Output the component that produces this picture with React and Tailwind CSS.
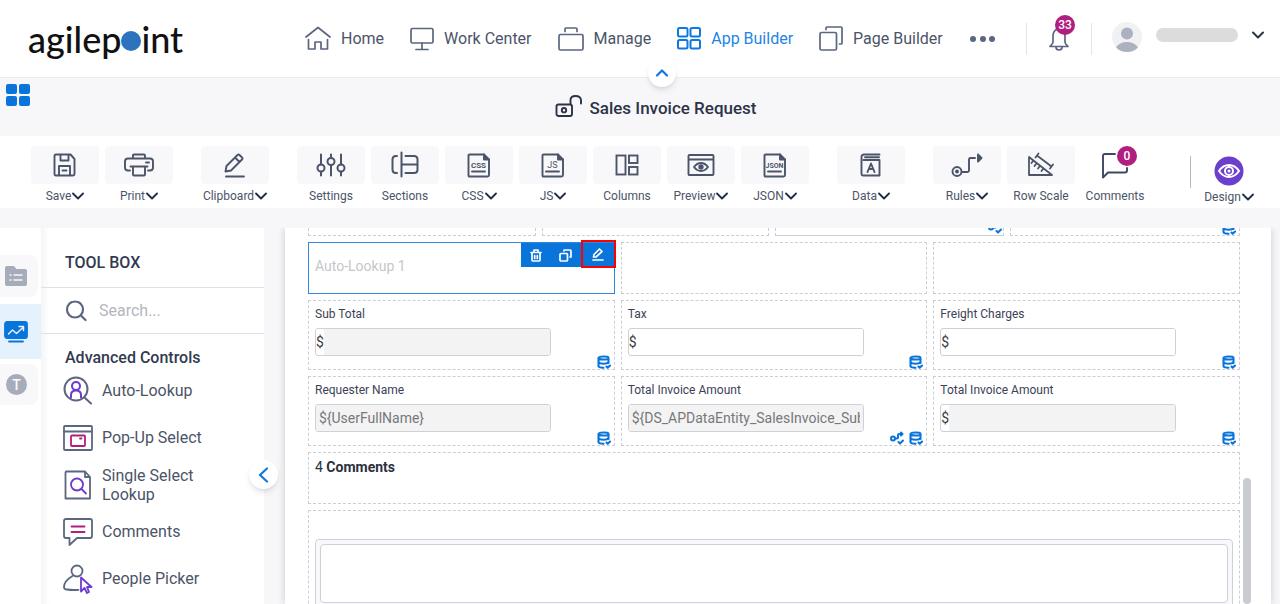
import { useState } from 'react';
import clsx from 'clsx';

const Svg = ({ w = 24, h = w, vb, sw = 2, children, className = '' }) => (
  <svg
    width={w}
    height={h}
    viewBox={vb || `0 0 ${w} ${h}`}
    fill="none"
    stroke="currentColor"
    strokeWidth={sw}
    strokeLinecap="round"
    strokeLinejoin="round"
    aria-hidden="true"
    className={clsx('shrink-0', className)}
  >
    {children}
  </svg>
);

const Chevron = () => (
  <Svg w={12} h={8} sw={1.8} className="text-[#1f2a44]"><path d="M1 1.500 6 6.500l5-5" /></Svg>
);

/* Top navigation icons */
const HomeIcon = () => (
  <Svg w={26} sw={1.7}>
    <path d="M1 11 13 1.500 25 11" />
    <path d="M3.500 13.500V23h6.500v-7h6v7h6.500v-9.500" />
  </Svg>
);
const MonitorIcon = () => (
  <Svg w={24} sw={1.7}>
    <rect x="1" y="1.500" width="22" height="14.500" rx="1.500" />
    <path d="M12 16v6M6 22.500h12" />
  </Svg>
);
const BriefcaseIcon = () => (
  <Svg w={26} h={24} sw={1.7}>
    <rect x="1" y="7.500" width="24" height="15.500" rx="1.500" />
    <path d="M7 4.500V2q0-1 1-1h10q1 0 1 1v2.500" />
  </Svg>
);
const TilesIcon = () => (
  <Svg w={24} h={23} sw={2}>
    <rect x="1" y="1" width="9.500" height="8.500" rx="1.500" />
    <rect x="13.500" y="1" width="9.500" height="8.500" rx="1.500" />
    <rect x="1" y="13" width="9.500" height="8.500" rx="1.500" />
    <rect x="13.500" y="13" width="9.500" height="8.500" rx="1.500" />
  </Svg>
);
const PagesIcon = () => (
  <Svg w={24} h={25} sw={1.7}>
    <rect x="1" y="6.500" width="16.500" height="17.500" rx="1.500" />
    <path d="M7 3.500V2q0-1 1-1h14q1 0 1 1v15q0 1-1 1h-1.500" />
  </Svg>
);
const BellIcon = () => (
  <Svg w={20} h={25} sw={1.7}>
    <path d="M7.500 3.500Q4 5.500 4 10v6q0 2-3 4.500h18q-3-2.500-3-4.500v-6q0-4.500-3.500-6.500" />
    <path d="M7 21q0 3 3 3t3-3" />
  </Svg>
);

/* Ribbon icons */
const SaveIcon = () => (
  <Svg w={24} sw={1.9}>
    <path d="M3 1.500h14.500l4 4.500V21q0 1.500-1.500 1.500H3Q1.500 22.500 1.500 21V3Q1.500 1.500 3 1.500Z" />
    <path d="M7.500 2v5.500h8V2M6 22v-9h11v9M9.500 17.500h4" />
  </Svg>
);
const PrintIcon = () => (
  <Svg w={30} h={24} sw={1.9}>
    <path d="M9 5V2.500Q9 1.500 10 1.500h10q1 0 1 1V5" />
    <path d="M6 17.500H4q-3 0-3-3V8.500Q1 5.500 4 5.500h22q3 0 3 3v6q0 3-3 3h-2M6.500 13.500h17M22 9.500h3" />
    <path d="M9 14v7.500q0 1 1 1h10q1 0 1-1V14" />
  </Svg>
);
const PencilIcon = () => (
  <Svg w={22} h={25} sw={1.9}>
    <path d="M1.500 18.500 2.500 13 13.500 2q1-1 2 0L18 4.500q1 1 0 2L7 17.500ZM11 4.500 15.500 9M2 23.500h18" />
  </Svg>
);
const SettingsIcon = () => (
  <Svg w={30} h={24} sw={2}>
    <path d="M5 1.500v10M5 19v3.500M15 1.500v3M15 12v10.500M25 1.500v10M25 19v3.500" />
    <circle cx="5" cy="15" r="3.500" />
    <circle cx="15" cy="8.500" r="3.500" />
    <circle cx="25" cy="15" r="3.500" />
  </Svg>
);
const SectionsIcon = () => (
  <Svg w={28} h={28} sw={2}>
    <path d="M6 5H5Q1.500 5 1.500 8.500v10Q1.500 22 5 22h1M10.500 1.500v24M14.500 5H23q3.500 0 3.500 3.500v10Q26.500 22 23 22h-8.500M11 13.500h15" />
  </Svg>
);
const FileTag = ({ text, size, weight = 700 }) => (
  <Svg w={24} h={25} sw={1.9}>
    <path d="M2.500 1.500H17l5 5V22q0 1.500-1.500 1.500h-18q-1 0-1-1V2.500q0-1 1-1ZM5 18.500h13" />
    <path d="M17 1.500v5h5" fill="currentColor" />
    <text
      x="11.500"
      y="14.500"
      fontSize={size}
      fontWeight={weight}
      fontFamily="Roboto, sans-serif"
      textAnchor="middle"
      fill="currentColor"
      stroke="none"
    >
      {text}
    </text>
  </Svg>
);
const ColumnsIcon = () => (
  <Svg w={24} h={22} sw={1.9}>
    <g strokeLinejoin="miter">
      <rect x="1.500" y="1.500" width="9" height="19" />
      <rect x="14" y="1.500" width="8.500" height="7.500" />
      <rect x="14" y="13" width="8.500" height="7.500" />
    </g>
  </Svg>
);
const PreviewIcon = () => (
  <Svg w={28} h={24} sw={1.9}>
    <rect x="1.500" y="2" width="25" height="20" rx="1" />
    <path d="M2 6.500h24M7 14q3-4 7-4t7 4q-3 4-7 4t-7-4Z" />
    <circle cx="14" cy="14" r="1.700" fill="currentColor" />
  </Svg>
);
const DataIcon = () => (
  <Svg w={22} h={24} sw={1.9}>
    <path d="M19.500 1.500H4Q1.500 1.500 1.500 4v17q0 1.500 1.500 1.500h16.500V7H3.500M5 4.300h14" />
    <path d="m7.500 19 3.500-8.500 3.500 8.500M9 16h4" />
  </Svg>
);
const RulesIcon = () => (
  <Svg w={32} h={26} sw={1.9}>
    <circle cx="6" cy="19.500" r="4.500" />
    <circle cx="6" cy="19.500" r="1" fill="currentColor" />
    <path d="M11 20h5.500q1.500 0 1.500-1.500V7.500Q18 6 19.500 6H24" />
    <path d="m27 2.500 3.500 3.500L27 9.500Z" fill="currentColor" />
  </Svg>
);
const ScaleIcon = () => (
  <Svg w={28} h={26} sw={1.8}>
    <path d="M2 5v18h23ZM6 9l-1.500 2M9 12l-1.500 2M12.500 14.500 11 16.500M16 17l-1.500 2M10 3.500l14.500 11M8.500 5.500l3-4M23 16.500l3-4" />
  </Svg>
);
const BubbleIcon = () => (
  <Svg w={28} h={27} sw={1.9} className="text-[#3f4860]">
    <path d="M14 2H4Q2 2 2 4v21.500L7 20.500h17q2 0 2-2V16" />
  </Svg>
);

/* Data source badges shown on the form cells */
const DbIcon = () => (
  <Svg w={14} h={14} sw={2.1} className="text-[#0975da]">
    <path d="M1.500 3q0-1.500 5-1.500t5 1.500-5 1.500-5-1.500ZM1.500 3v8q0 1.700 5 1.700M11.500 3v5M1.500 7q1 1.700 5 1.700t5-1.700" />
    <path d="m9.500 11.500 1.200 1.200 2.300-2.200" />
  </Svg>
);
const RuleCheckIcon = () => (
  <Svg w={14} h={14} sw={2} className="mb-px text-[#0975da]">
    <circle cx="3" cy="7.500" r="2" />
    <path d="M5 7.500h2q1 0 1-1V4q0-1 1-1h3M11 1.500 12.500 3 11 4.500M8.500 11l1.500 1.500 3-3" />
  </Svg>
);

const navItems = [
  { label: 'Home', icon: <HomeIcon /> },
  { label: 'Work Center', icon: <MonitorIcon /> },
  { label: 'Manage', icon: <BriefcaseIcon /> },
  { label: 'App Builder', icon: <TilesIcon />, active: true },
  { label: 'Page Builder', icon: <PagesIcon /> },
];

const ribbonGroups = [
  [
    { label: 'Save', icon: <SaveIcon />, menu: true },
    { label: 'Print', icon: <PrintIcon />, menu: true },
  ],
  [{ label: 'Clipboard', icon: <PencilIcon />, menu: true }],
  [
    { label: 'Settings', icon: <SettingsIcon /> },
    { label: 'Sections', icon: <SectionsIcon /> },
    { label: 'CSS', icon: <FileTag text="CSS" size={8} />, menu: true },
    { label: 'JS', icon: <FileTag text="JS" size={9} weight={400} />, menu: true },
    { label: 'Columns', icon: <ColumnsIcon /> },
    { label: 'Preview', icon: <PreviewIcon />, menu: true },
    { label: 'JSON', icon: <FileTag text="JSON" size={7} />, menu: true },
  ],
  [{ label: 'Data', icon: <DataIcon />, menu: true }],
  [
    { label: 'Rules', icon: <RulesIcon />, menu: true },
    { label: 'Row Scale', icon: <ScaleIcon /> },
    { label: 'Comments', icon: <BubbleIcon />, count: 0, plain: true },
  ],
];

const controls = [
  {
    label: 'Auto-Lookup',
    icon: (
      <Svg w={30} sw={2}>
        <circle cx="13" cy="13" r="11.500" />
        <path d="m21.500 21.500 6.500 6" />
        <g className="text-[#6d3bd1]">
          <circle cx="13" cy="10" r="4" />
          <path d="M8 21.500v-2.500q0-4.500 5-4.500t5 4.500v2.500" />
        </g>
      </Svg>
    ),
  },
  {
    label: 'Pop-Up Select',
    icon: (
      <Svg w={30} h={26} sw={1.8}>
        <rect x="1" y="1" width="28" height="24" rx="1" />
        <path d="M1 6.500h28" />
        <g className="text-[#b01e80]">
          <rect x="8" y="10.500" width="14" height="10.500" rx="1" />
          <path d="M17 13.500h1.500" />
        </g>
      </Svg>
    ),
  },
  {
    label: 'Single Select Lookup',
    icon: (
      <Svg w={30} sw={1.8}>
        <path d="M3 1.500h19l5 5.500v21.500H2.500v-26ZM22 1.500V7h5" />
        <g className="text-[#6d3bd1]">
          <circle cx="14" cy="14.500" r="6" />
          <path d="m18.500 19 4.500 4.500" />
        </g>
      </Svg>
    ),
  },
  {
    label: 'Comments',
    icon: (
      <Svg w={30} h={28} sw={1.8}>
        <path d="M3 1h24q2 0 2 2v15q0 2-2 2H14l-7.500 7V20H3q-2 0-2-2V3q0-2 2-2Z" />
        <path d="M8.500 8.500h13M8.500 14h13" className="text-[#b01e80]" />
      </Svg>
    ),
  },
  {
    label: 'People Picker',
    icon: (
      <Svg w={30} sw={1.8}>
        <circle cx="14" cy="7" r="5.500" />
        <path d="M9.500 12Q1 17 1 23q0 2.500 3 2.500 5 .8 11.500.3" />
        <path d="M18 13.500v14l3.500-3.500 2.500 5 2-1-2-5h4.500Z" className="text-[#6d3bd1]" />
      </Svg>
    ),
  },
];

const RibbonButton = ({ label, icon, menu, count, plain }) => (
  <button type="button" className="flex w-[68px] flex-col items-center gap-1">
    <span className={clsx('relative flex h-[38px] w-full items-center justify-center rounded', !plain && 'bg-[#f8f8fa]')}>
      {icon}
      {count !== undefined && (
        <span className="absolute top-0 right-3 flex size-5 items-center justify-center rounded-full bg-[#b01e80] text-xs font-medium text-white">
          {count}
        </span>
      )}
    </span>
    <span className="flex items-center gap-px text-xs leading-4">
      {label}
      {menu && <Chevron />}
    </span>
  </button>
);

const Cell = ({ children, selected, className = '' }) => (
  <div
    className={clsx(
      'relative flex min-w-0 flex-1 flex-col border',
      selected ? 'border-solid border-[#2f86dd]' : 'border-dashed border-[#ccced6]',
      className
    )}
  >
    {children}
  </div>
);

const Field = ({ id, label, value = '', readOnly, currency, rule }) => (
  <Cell className="h-[70px] pl-[6px]">
    <label htmlFor={id} className="mt-[5px] self-start text-xs leading-4 text-[#3c4257]">{label}</label>
    <div
      className={clsx(
        'mt-[6px] flex h-7 w-[79%] shrink-0 items-center overflow-hidden rounded-[3px] border border-[#ced1da]',
        currency || !readOnly ? 'bg-white' : 'bg-[#f3f3f3]'
      )}
    >
      {currency && <span className="w-2 text-sm text-[#3c3c3c]">$</span>}
      <input
        id={id}
        type="text"
        defaultValue={value}
        readOnly={readOnly}
        className={clsx('h-full min-w-0 flex-1 px-[3px] text-sm text-[#77787c] outline-none', readOnly ? 'bg-[#f3f3f3]' : 'bg-white')}
      />
    </div>
    <div className="-mt-px flex justify-end gap-[5px] pr-[3px]">
      {rule && <RuleCheckIcon />}
      <DbIcon />
    </div>
  </Cell>
);

const Header = () => (
  <header className="relative flex h-[78px] shrink-0 items-center border-b border-[#ececf0] bg-white">
    <a href="#home" aria-label="agilepoint" className="ml-7 flex w-[157px] items-center font-['Lato'] text-[36px] leading-10 font-medium text-[#111]">
      agilep
      <span className="mt-1 size-5 rounded-full bg-[#2b73bd]" />
      int
    </a>
    <nav className="ml-[120px] flex flex-1 items-center gap-[26px] text-[#5b6680]">
      {navItems.map((item) => (
        <a
          key={item.label}
          href="#nav"
          className={clsx('flex items-center gap-[10px] text-base whitespace-nowrap', item.active && 'text-[#0f78dc]')}
        >
          {item.icon}
          <span className={item.active ? 'text-[#2484e6]' : 'text-[#4b5468]'}>{item.label}</span>
        </a>
      ))}
      <button type="button" aria-label="More">
        <Svg w={28} h={8} sw={0}>
          <g fill="currentColor">
            <circle cx="4" cy="4" r="3" />
            <circle cx="14" cy="4" r="3" />
            <circle cx="23" cy="4" r="3" />
          </g>
        </Svg>
      </button>
    </nav>
    <div className="flex items-center pr-4">
      <button type="button" aria-label="Notifications" className="relative flex h-8 w-[66px] items-center justify-center border-x border-[#e2e4ea] text-[#5b6680]">
        <BellIcon />
        <span className="absolute -top-2 right-4 flex size-5 items-center justify-center rounded-full bg-[#b01e80] text-xs font-medium text-white">33</span>
      </button>
      <button type="button" aria-label="Account" className="flex items-center pl-5">
        <svg width="30" height="30" viewBox="0 0 30 30" aria-hidden="true" className="-mt-1">
          <circle cx="15" cy="15" r="15" fill="#f0f1f3" />
          <circle cx="15" cy="11.500" r="6" fill="#abb1bf" />
          <path d="M4 25.500q3.500-5.500 11-5.500t11 5.500Q21.500 30 15 30T4 25.500Z" fill="#abb1bf" />
        </svg>
        <span className="-mt-2 ml-[14px] h-[14px] w-[82px] rounded-lg bg-[#dcdcdc]" />
        <Svg w={12} h={8} className="-mt-2 ml-[14px] text-[#2c3347]"><path d="m1 1.500 5 5 5-5" /></Svg>
      </button>
    </div>
    <button
      type="button"
      aria-label="Collapse header"
      className="absolute -bottom-[10px] left-[51.7%] z-10 flex size-7 -translate-x-1/2 items-center justify-center rounded-full bg-white text-[#0f78dc] shadow-md"
    >
      <Svg w={14} h={10} sw={2.2}><path d="m2 7.500 5-5 5 5" /></Svg>
    </button>
  </header>
);

const TitleBar = () => (
  <div className="flex h-[58px] shrink-0 items-start px-[6px] text-[#2c3347]">
    <button type="button" aria-label="Apps" className="mt-[6px] grid grid-cols-2 gap-[2px]">
      {[0, 1, 2, 3].map((i) => (
        <span key={i} className="h-[10px] w-[11px] rounded-[2px] bg-[#0975da]" />
      ))}
    </button>
    <h1 className="mt-4 ml-2 flex flex-1 items-center justify-center gap-[6px] text-[17px] leading-7 font-medium">
      <Svg w={28} h={24} sw={1.9} className="-mt-1">
        <rect x="1.500" y="10.500" width="15.500" height="11.500" rx="2" />
        <circle cx="9" cy="16.200" r="2.200" />
        <path d="M15.500 10V6q0-4 5-4T26 6v3.500" />
      </Svg>
      Sales Invoice Request
    </h1>
  </div>
);

const Ribbon = () => (
  <div className="flex h-[72px] shrink-0 items-start bg-white pt-[10px] pr-[17px] pl-[31px] text-[#4b5468]">
    <div className="flex gap-7">
      {ribbonGroups.map((group) => (
        <div key={group[0].label} className="flex gap-[6px]">
          {group.map((item) => <RibbonButton key={item.label} {...item} />)}
        </div>
      ))}
    </div>
    <div className="ml-auto flex items-start">
      <span className="mt-[10px] mr-1 h-8 w-px bg-[#b6b8bf]" />
      <button type="button" className="flex w-[68px] flex-col items-center pt-[10px]">
        <svg width="30" height="30" viewBox="0 0 30 30" fill="none" stroke="#fff" strokeWidth="2" aria-hidden="true">
          <circle cx="15" cy="15" r="14.500" fill="#6b3fcb" stroke="none" />
          <path d="M5 15q4-6 10-6t10 6q-4 6-10 6T5 15Z" />
          <circle cx="15" cy="15" r="4" />
          <circle cx="15" cy="15" r="1.500" fill="#fff" stroke="none" />
        </svg>
        <span className="mt-[3px] flex items-center gap-px text-xs leading-4">Design<Chevron /></span>
      </button>
    </div>
  </div>
);

const SideRail = () => (
  <div className="flex w-[41px] shrink-0 flex-col items-start bg-white pt-[27px] text-[#a6acba]">
    <button type="button" aria-label="Form fields" className="flex h-[42px] w-[38px] items-center rounded-r-lg bg-[#f8f8fa] pl-[5px]">
      <svg width="22" height="20" viewBox="0 0 22 20" aria-hidden="true">
        <path d="M2 0h7l2.500 3H20q2 0 2 2v13q0 2-2 2H2q-2 0-2-2V2Q0 0 2 0Z" fill="currentColor" />
        <path d="M4.500 9h2M8.500 9h9M4.500 14h2M8.500 14h9" stroke="#f8f8fa" strokeWidth="1.500" />
      </svg>
    </button>
    <button type="button" aria-label="Advanced controls" className="mt-[7px] flex h-[55px] w-full items-center bg-[#e5f1fc] pl-1 text-[#0975da]">
      <Svg w={24} h={22} sw={1.8}>
        <rect x="1" y="1" width="22" height="16" rx="2" fill="currentColor" />
        <path d="M5 20.500h14" />
        <path d="m4.500 13 4-4 4 3.500 6.500-6M15 5.500h4.500v4" stroke="#e5f1fc" strokeWidth="1.500" />
      </Svg>
    </button>
    <button type="button" aria-label="Text" className="mt-[5px] flex h-[41px] w-[38px] items-center rounded-r-lg bg-[#f8f8fa] pl-[6px]">
      <span className="flex size-[21px] items-center justify-center rounded-full bg-[#a6acba] text-sm font-medium text-[#f8f8fa]">T</span>
    </button>
  </div>
);

const ToolBox = () => {
  const [query, setQuery] = useState('');

  return (
    <aside className="relative w-[223px] shrink-0 bg-white text-[#4b5468] shadow-[inset_10px_0_10px_-8px_#f0f0f2]">
      <h2 className="h-[59px] pt-[23px] pl-6 text-base leading-6 font-medium text-[#333a50]">TOOL BOX</h2>
      <div className="flex h-[47px] items-center gap-3 border-y border-[#dfe1e8] pl-6">
        <Svg w={22} sw={2.2} className="text-[#5b6680]">
          <circle cx="10" cy="9.500" r="8" />
          <path d="m16 15.500 4.500 4.500" />
        </Svg>
        <input
          type="text"
          aria-label="Search"
          placeholder="Search..."
          value={query}
          onChange={(e) => setQuery(e.target.value)}
          className="w-32 text-base text-[#4b5468] placeholder-[#b4b6be] outline-none"
        />
      </div>
      <h3 className="pt-[13px] pl-6 text-base leading-[22px] font-medium text-[#333a50]">Advanced Controls</h3>
      <ul className="-mt-[2px]">
        {controls.map((control) => (
          <li key={control.label}>
            <button type="button" className="flex h-[47px] w-full items-center gap-[9px] pl-[22px] text-left text-base leading-[19px]">
              <span className="text-[#5b6680]">{control.icon}</span>
              <span className="w-28">{control.label}</span>
            </button>
          </li>
        ))}
      </ul>
      <button
        type="button"
        aria-label="Collapse tool box"
        className="absolute top-[232px] -right-[14px] z-10 flex size-[29px] items-center justify-center rounded-full bg-white text-[#0f78dc] shadow-md"
      >
        <Svg w={12} h={16} sw={2.2}><path d="M9 1.500 2 8l7 6.500" /></Svg>
      </button>
    </aside>
  );
};

const Canvas = () => (
  <main className="mr-[9px] ml-[21px] flex min-w-0 flex-1 bg-white pl-[23px] shadow-[0_0_8px_rgba(0,0,0,0.18)] [clip-path:inset(0_-9px_0_-9px)]">
    <div className="flex min-w-0 flex-1 flex-col gap-[6px]">
      <div className="flex h-2 shrink-0 items-end gap-[6px] overflow-hidden">
        <Cell className="h-12" />
        <Cell className="h-12" />
        <Cell className="h-12 items-end justify-end pr-px [border-bottom-style:solid]"><RuleCheckIcon /></Cell>
        <Cell className="h-12 items-end justify-end pr-[3px]"><DbIcon /></Cell>
      </div>
      <div className="flex shrink-0 gap-[6px]">
        <Cell selected className="h-[52px]">
          <span className="mt-[14px] pl-[6px] text-sm leading-[18px] text-[#c6c6ca]">Auto-Lookup 1</span>
          <div className="absolute top-0 -right-px flex h-6 bg-[#0975da] text-white">
            <button type="button" aria-label="Delete" className="flex w-[30px] items-center justify-center">
              <Svg w={12} h={13} sw={1.7}>
                <path d="M1 3.500h10M4 3V1h4v2M2 4v7q0 1 1 1h6q1 0 1-1V4M4.700 6.500v3M7.300 6.500v3" />
              </Svg>
            </button>
            <button type="button" aria-label="Duplicate" className="flex w-[30px] items-center justify-center">
              <Svg w={13} h={13} sw={1.7}>
                <rect x="1" y="4.500" width="7.500" height="7.500" rx="1" />
                <path d="M5 2V1h6q1 0 1 1v6h-1" />
              </Svg>
            </button>
            <button type="button" aria-label="Edit" className="-mt-[3px] -mr-px flex h-7 w-[35px] items-center justify-center border-2 border-[#f00]">
              <Svg w={12} h={13} sw={1.7}>
                <path d="M1.500 9 2 6.500 7.500 1l2.500 2.500L4 9ZM1 12h10" />
              </Svg>
            </button>
          </div>
        </Cell>
        <Cell />
        <Cell />
      </div>
      <div className="flex shrink-0 gap-[6px]">
        <Field id="sub-total" label="Sub Total" currency readOnly />
        <Field id="tax" label="Tax" currency />
        <Field id="freight" label="Freight Charges" currency />
      </div>
      <div className="flex shrink-0 gap-[6px]">
        <Field id="requester" label="Requester Name" value="${UserFullName}" readOnly />
        <Field id="total-expr" label="Total Invoice Amount" value="${DS_APDataEntity_SalesInvoice_SubTotal}" readOnly rule />
        <Field id="total" label="Total Invoice Amount" currency readOnly />
      </div>
      <div className="flex shrink-0">
        <Cell className="h-[52px] pt-[5px] pl-[6px]">
          <h4 className="text-sm leading-[18px] text-[#2c3040]">4 <b>Comments</b></h4>
        </Cell>
      </div>
      <div className="flex shrink-0">
        <Cell className="h-36 px-[6px] pt-7">
          <div className="flex flex-1 rounded border border-[#ced1da] bg-[#f9f9fb] p-1">
            <textarea aria-label="Comments" className="h-[59px] flex-1 resize-none rounded-sm border border-[#ced1da] bg-white outline-none" />
          </div>
        </Cell>
      </div>
    </div>
    <div className="mr-5 ml-[3px] w-2 pt-[250px]">
      <div className="h-full rounded-full bg-[#c8cbcf]" />
    </div>
  </main>
);

export default function App() {
  return (
    <div className="flex h-screen flex-col overflow-hidden bg-[#f7f7fa] font-['Roboto',sans-serif]">
      <Header />
      <TitleBar />
      <Ribbon />
      <div className="mt-5 flex min-h-0 flex-1">
        <SideRail />
        <ToolBox />
        <Canvas />
      </div>
    </div>
  );
}
